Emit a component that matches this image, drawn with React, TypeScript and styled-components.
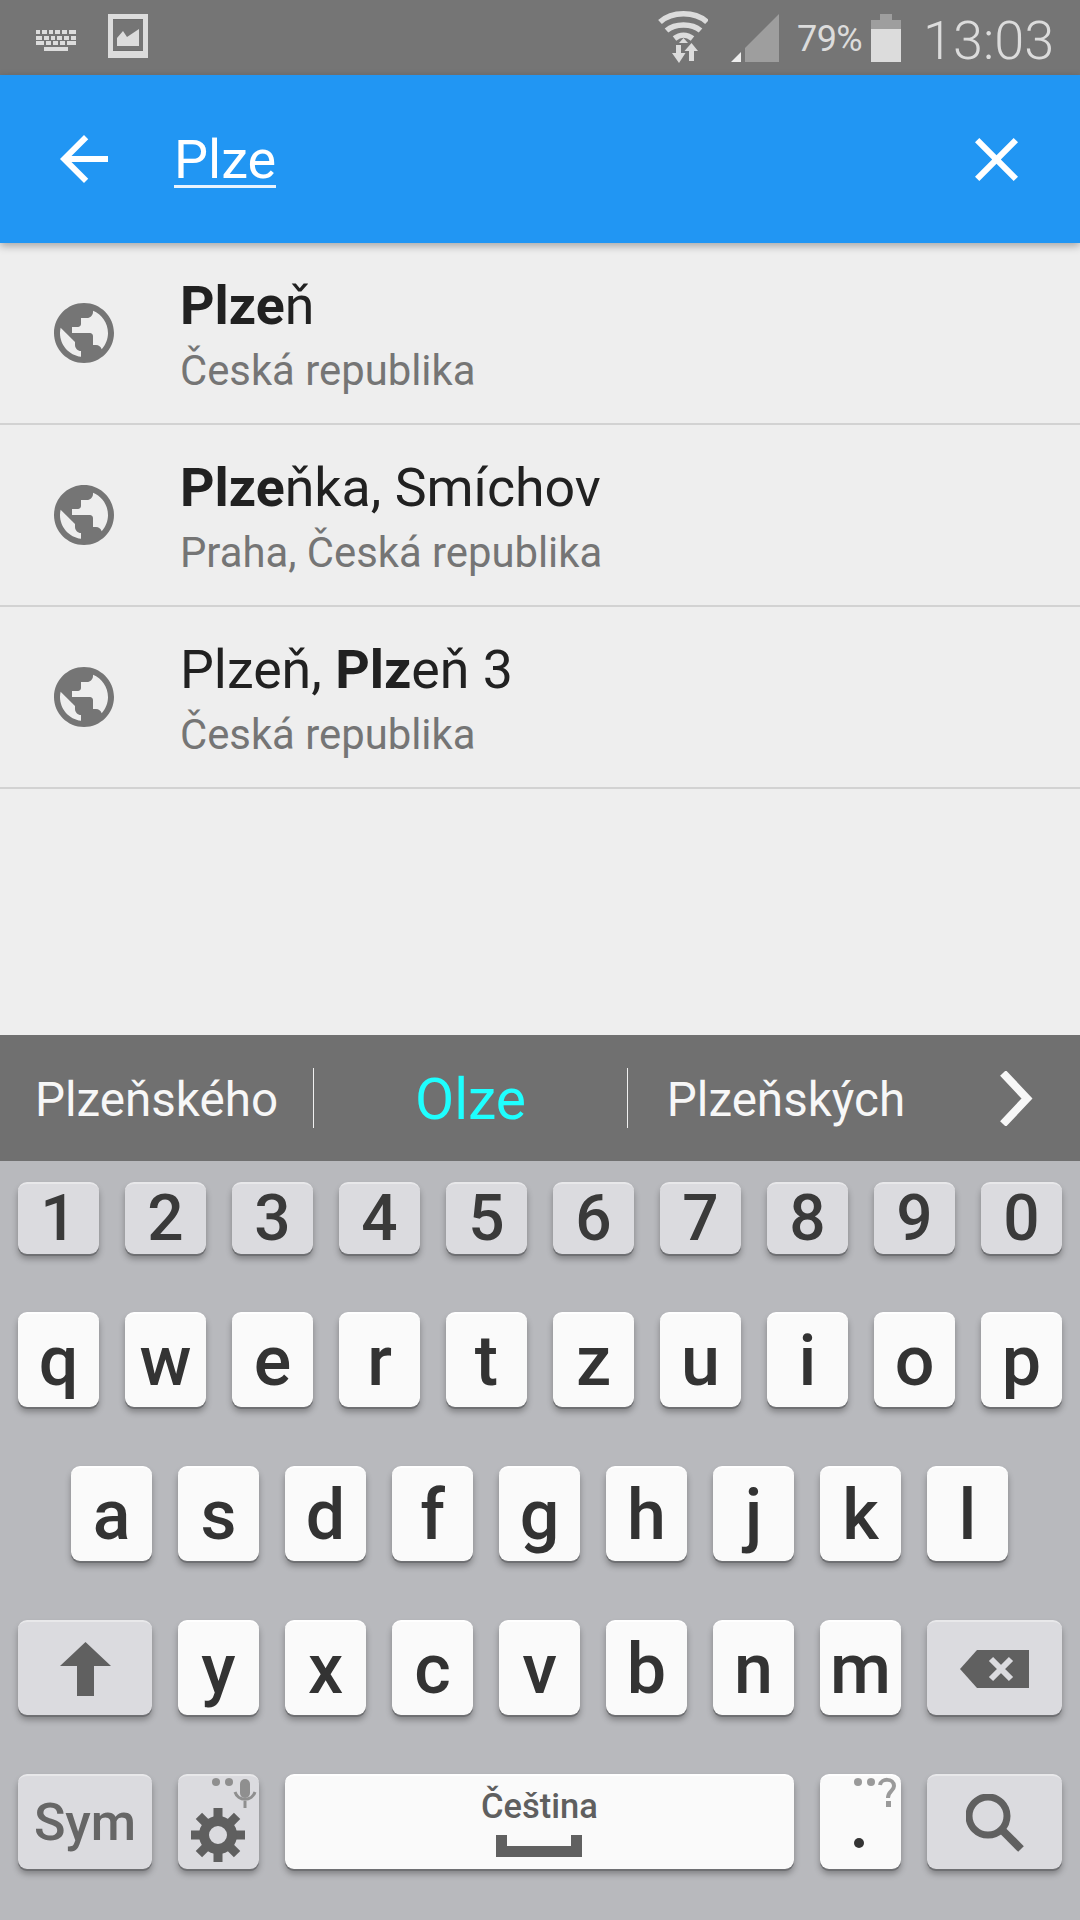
import React from "react";
import styled, { createGlobalStyle } from "styled-components";

const Global = createGlobalStyle`
  html, body { margin: 0; padding: 0; background: #eeeeee; }
  body { font-family: Roboto, "Liberation Sans", sans-serif; }
  #root { width: 1080px; height: 1920px; overflow: hidden; }
  * { box-sizing: border-box; }
`;

const Page = styled.div`
  width: 1080px;
  height: 1920px;
  display: flex;
  flex-direction: column;
  background: #eeeeee;
`;

/* status bar */
const StatusBar = styled.div`
  height: 75px;
  flex: none;
  background: #757575;
  display: flex;
  align-items: center;
  color: #dcdcdc;
  position: relative;
`;
const StatusIcon = styled.svg<{ $ml: number }>`
  display: block;
  flex: none;
  margin-left: ${(p) => p.$ml}px;
`;
const Percent = styled.span`
  font-size: 36px;
  font-weight: 400;
  margin-left: 18px;
  letter-spacing: -0.6px;
  line-height: 75px;
  padding-top: 4px;
  width: 66px;
  flex: none;
`;
const Clock = styled.span`
  font-size: 54px;
  font-weight: 300;
  margin-left: 22px;
  line-height: 75px;
  padding-top: 5px;
  flex: none;
`;

/* search bar */
const AppBar = styled.div`
  height: 168px;
  flex: none;
  background: #2196f3;
  display: flex;
  align-items: center;
  position: relative;
  z-index: 2;
  box-shadow: 0 3px 8px rgba(0, 0, 0, 0.3);
  padding: 0 62px 0 60px;
`;
const Query = styled.span`
  font-size: 54px;
  color: #fff;
  margin-left: 66px;
  flex: 1;
  line-height: 60px;
  padding-top: 2px;
  > span {
    border-bottom: 3px solid #e9f4fe;
    display: inline-block;
    line-height: 50px;
    padding-top: 5px;
  }
`;

/* results */
const List = styled.div`
  flex: 1;
  background: #eeeeee;
`;
const Row = styled.div`
  height: 182px;
  border-bottom: 2px solid #d2d2d2;
  display: flex;
  align-items: center;
  padding-left: 54px;
`;
const RowText = styled.div`
  margin-left: 67px;
  display: flex;
  flex-direction: column;
  padding-top: 14px;
`;
const Title = styled.div`
  font-size: 53.700px;
  line-height: 62px;
  color: #212121;
  margin-left: -1px;
  b { font-weight: 700; }
`;
const Sub = styled.div`
  font-size: 41.800px;
  line-height: 68px;
  color: #757575;
  margin-left: -1px;
`;

/* suggestions */
const Candidates = styled.div`
  height: 126px;
  flex: none;
  background: #707070;
  display: flex;
  align-items: center;
  position: relative;
`;
const Cand = styled.div<{ $w: number; $active?: boolean }>`
  width: ${(p) => p.$w}px;
  flex: none;
  text-align: center;
  font-size: ${(p) => (p.$active ? 57 : 47.6)}px;
  color: ${(p) => (p.$active ? "#1effff" : "#f7f7f7")};
  line-height: 60px;
  padding-top: 4px;
`;
const CandDivider = styled.div`
  width: 1px;
  height: 60px;
  background: #f0f0f0;
  flex: none;
`;

/* keyboard */
const Keyboard = styled.div`
  height: 759px;
  flex: none;
  background: #b8b9bd;
  padding-top: 21px;
  display: flex;
  flex-direction: column;
`;
const KeyRow = styled.div<{ $mb: number; $pr?: number }>`
  display: flex;
  justify-content: center;
  gap: 26px;
  margin-bottom: ${(p) => p.$mb}px;
  padding-right: ${(p) => p.$pr ?? 0}px;
`;
const Key = styled.div<{ $w?: number; $h?: number; $dark?: boolean; $size?: number; $color?: string }>`
  position: relative;
  width: ${(p) => p.$w ?? 81}px;
  height: ${(p) => p.$h ?? 95}px;
  flex: none;
  border-radius: 9px;
  background: ${(p) => (p.$dark ? "#dbdbdf" : "#fafafa")};
  border-top: 2px solid ${(p) => (p.$dark ? "#e8e8ea" : "#ffffff")};
  box-shadow: 0 2px 0 #6f7073, 0 5px 6px rgba(0, 0, 0, 0.3);
  display: flex;
  align-items: center;
  justify-content: center;
  font-size: ${(p) => p.$size ?? 70}px;
  font-weight: 500;
  line-height: 1;
  color: ${(p) => p.$color ?? "#333333"};
`;
const KeyLabel = styled.span`
  display: block;
`;
const Corner = styled.svg`
  position: absolute;
  left: 0;
  top: -2px;
`;
const Space = styled.div`
  display: flex;
  flex-direction: column;
  align-items: center;
  gap: 9px;
  margin-top: -3px;
`;
const SpaceText = styled.span`
  font-size: 34.500px;
  font-weight: 500;
  color: #5f5f5f;
  line-height: 40px;
`;
const SpaceBar = styled.svg`
  display: block;
  margin-left: -2px;
`;

const Glyph = styled.svg`
  display: block;
  flex: none;
`;

const WIDE = 134;
const rowNum = "1234567890".split("");
const rowQ = "qwertzuiop".split("");
const rowA = "asdfghjkl".split("");
const rowY = "yxcvbnm".split("");

const Globe = () => (
  <Glyph width="60" height="60" viewBox="2 2 20 20">
    <path
      fill="#757575"
      d="M12 2C6.48 2 2 6.48 2 12s4.48 10 10 10 10-4.48 10-10S17.52 2 12 2zm-1 17.93c-3.95-.49-7-3.85-7-7.93 0-.62.08-1.21.21-1.79L9 15v1c0 1.1.9 2 2 2v1.93zm6.9-2.54c-.26-.81-1-1.39-1.9-1.39h-1v-3c0-.55-.45-1-1-1H8v-2h2c.55 0 1-.45 1-1V7h2c1.1 0 2-.9 2-2v-.41c2.93 1.19 5 4.06 5 7.41 0 2.08-.8 3.97-2.1 5.39z"
    />
  </Glyph>
);

export default function App() {
  return (
    <Page>
      <Global />
      <StatusBar>
        <StatusIcon $ml={36} width="40" height="21" viewBox="0 0 40 21" fill="#dcdcdc" style={{ marginTop: 5 }}>
          <rect x="0" y="0" width="4" height="4" />
          <rect x="6" y="0" width="5" height="4" />
          <rect x="13" y="0" width="4" height="4" />
          <rect x="19" y="0" width="5" height="4" />
          <rect x="26" y="0" width="5" height="4" />
          <rect x="33" y="0" width="7" height="4" />
          <rect x="0" y="6" width="6" height="4" />
          <rect x="8" y="6" width="5" height="4" />
          <rect x="15" y="6" width="4" height="4" />
          <rect x="21" y="6" width="5" height="4" />
          <rect x="28" y="6" width="5" height="4" />
          <rect x="35" y="6" width="5" height="4" />
          <rect x="0" y="11" width="8" height="4" />
          <rect x="10" y="11" width="5" height="4" />
          <rect x="17" y="11" width="5" height="4" />
          <rect x="24" y="11" width="5" height="4" />
          <rect x="31" y="11" width="9" height="4" />
          <rect x="8" y="17" width="24" height="4" />
        </StatusIcon>
        <StatusIcon $ml={32} width="40" height="44" viewBox="0 0 40 44" style={{ marginTop: -3 }}>
          <path fill="#dcdcdc" d="M0 0h40v44H0z" />
          <path fill="#757575" d="M5 5h30v32H5z" />
          <path fill="#6e6e6e" d="M5 5h30v1H5zM5 36h30v1H5z" />
          <path fill="#dcdcdc" d="M9 32v-8l6-7 4 6 12-8v17z" />
        </StatusIcon>
        <StatusIcon $ml={510} width="50" height="54" viewBox="0 0 50 54" style={{ marginTop: -2 }}>
          <g fill="none" stroke="#dcdcdc" strokeWidth="5.500">
            <path d="M2 12C14 1 37 1 49 12" />
            <path d="M8.500 20.500C17 13 34 13 42.500 20.500" />
            <path d="M16.500 28.500C22 24 29 24 34.500 28.500" />
          </g>
          <path fill="#dcdcdc" d="M21 33l4.500-5 4.500 5z" />
          <path fill="#dcdcdc" d="M18 35h5v8h4.500l-6.500 10-7-10h4z" />
          <path fill="#dcdcdc" d="M33.500 33 40 41h-4v10h-5V41h-4.500z" />
        </StatusIcon>
        <StatusIcon $ml={23} width="48" height="48" viewBox="0 0 48 48" style={{ marginTop: 1 }}>
          <path fill="#9e9e9e" d="M14 48V34L48 0v48z" />
          <path fill="#eeeeee" d="M0 48 10 38v10z" />
        </StatusIcon>
        <Percent>79%</Percent>
        <StatusIcon $ml={8} width="30" height="48" viewBox="0 0 30 48" style={{ marginTop: 1 }}>
          <path fill="#9e9e9e" d="M9 0h12v6h9v43H0V6h9z" />
          <path fill="#dcdcdc" d="M0 15h30v33H0z" />
        </StatusIcon>
        <Clock>13:03</Clock>
      </StatusBar>

      <AppBar>
        <Glyph width="48" height="48" viewBox="4 4 16 16">
          <path fill="#fff" d="M20 11H7.830l5.590-5.590L12 4l-8 8 8 8 1.410-1.410L7.830 13H20v-2z" />
        </Glyph>
        <Query>
          <span>Plze</span>
        </Query>
        <Glyph width="43" height="43" viewBox="5 5 14 14">
          <path
            fill="#fff"
            d="M19 6.410L17.590 5 12 10.590 6.410 5 5 6.410 10.590 12 5 17.590 6.410 19 12 13.410 17.590 19 19 17.590 13.410 12z"
          />
        </Glyph>
      </AppBar>

      <List>
        <Row>
          <Globe />
          <RowText>
            <Title>
              <b>Plze</b>ň
            </Title>
            <Sub>Česká republika</Sub>
          </RowText>
        </Row>
        <Row>
          <Globe />
          <RowText>
            <Title>
              <b>Plze</b>ňka, Smíchov
            </Title>
            <Sub>Praha, Česká republika</Sub>
          </RowText>
        </Row>
        <Row>
          <Globe />
          <RowText>
            <Title>
              Plzeň, <b>Plz</b>eň 3
            </Title>
            <Sub>Česká republika</Sub>
          </RowText>
        </Row>
      </List>

      <Candidates>
        <Cand $w={313}>Plzeňského</Cand>
        <CandDivider />
        <Cand $w={313} $active>
          Olze
        </Cand>
        <CandDivider />
        <Cand $w={316}>Plzeňských</Cand>
        <Glyph width="34" height="55" viewBox="0 0 34 55" style={{ marginLeft: 55 }}>
          <path fill="none" stroke="#f7f7f7" strokeWidth="8" d="M4 2 L28 27.500 L4 53" />
        </Glyph>
      </Candidates>

      <Keyboard>
        <KeyRow $mb={58}>
          {rowNum.map((k) => (
            <Key key={k} $dark $h={72} $size={64} $color="#3a3a3a">
              <KeyLabel>{k}</KeyLabel>
            </Key>
          ))}
        </KeyRow>
        <KeyRow $mb={59}>
          {rowQ.map((k) => (
            <Key key={k}>
              <KeyLabel>{k}</KeyLabel>
            </Key>
          ))}
        </KeyRow>
        <KeyRow $mb={59} $pr={1}>
          {rowA.map((k) => (
            <Key key={k}>
              <KeyLabel>{k}</KeyLabel>
            </Key>
          ))}
        </KeyRow>
        <KeyRow $mb={59}>
          <Key $dark $w={WIDE}>
            <svg width="51" height="54" viewBox="0 0 51 54">
              <path fill="#606060" d="M25.500 0 51 24H34v30H17V24H0z" />
            </svg>
          </Key>
          {rowY.map((k) => (
            <Key key={k}>
              <KeyLabel>{k}</KeyLabel>
            </Key>
          ))}
          <Key $dark $w={WIDE + 1}>
            <svg width="69" height="38" viewBox="0 0 69 38">
              <path fill="#606060" d="M0 19 17 0h52v38H17z" />
              <path stroke="#dbdbdf" strokeWidth="6" d="M31 9l20 20M51 9L31 29" />
            </svg>
          </Key>
        </KeyRow>
        <KeyRow $mb={0}>
          <Key $dark $w={WIDE} $size={52} $color="#666666">
            <KeyLabel>Sym</KeyLabel>
          </Key>
          <Key $dark>
            <Corner width="81" height="95" viewBox="0 0 81 95">
              <circle cx="38" cy="8" r="4" fill="#8f8f8f" />
              <circle cx="51" cy="8" r="4" fill="#8f8f8f" />
              <rect x="62" y="5" width="10" height="19" rx="5" fill="#8f8f8f" />
              <path d="M57 18a10.500 10.500 0 0 0 20 0" fill="none" stroke="#8f8f8f" strokeWidth="3" />
              <rect x="65.500" y="27" width="3" height="7" fill="#8f8f8f" />
              <g transform="translate(40 61)" fill="#5f5f5f">
                <rect x="-4.500" y="-27" width="9" height="54" />
                <rect x="-4.500" y="-27" width="9" height="54" transform="rotate(45)" />
                <rect x="-4.500" y="-27" width="9" height="54" transform="rotate(90)" />
                <rect x="-4.500" y="-27" width="9" height="54" transform="rotate(135)" />
              </g>
              <circle cx="40" cy="61" r="14" fill="#dbdbdf" stroke="#5f5f5f" strokeWidth="10" />
            </Corner>
          </Key>
          <Key $w={509}>
            <Space>
              <SpaceText>Čeština</SpaceText>
              <SpaceBar width="86" height="22" viewBox="0 0 86 22">
                <path fill="#606060" d="M0 0h11v11h64V0h11v22H0z" />
              </SpaceBar>
            </Space>
          </Key>
          <Key>
            <Corner width="81" height="95" viewBox="0 0 81 95">
              <circle cx="38" cy="8" r="4" fill="#9a9a9a" />
              <circle cx="51" cy="8" r="4" fill="#9a9a9a" />
              <path d="M60 11c1-7 14-7 14 1 0 5-6 5-6 12" fill="none" stroke="#9a9a9a" strokeWidth="4" />
              <rect x="66" y="27" width="5" height="6" fill="#9a9a9a" />
              <circle cx="39" cy="69" r="5" fill="#333333" />
            </Corner>
          </Key>
          <Key $dark $w={WIDE + 1}>
            <svg width="58" height="58" viewBox="0 0 58 58">
              <circle cx="22" cy="22" r="19" fill="none" stroke="#606060" strokeWidth="7" />
              <path d="M35 35 55 55" stroke="#606060" strokeWidth="8" />
            </svg>
          </Key>
        </KeyRow>
      </Keyboard>
    </Page>
  );
}
